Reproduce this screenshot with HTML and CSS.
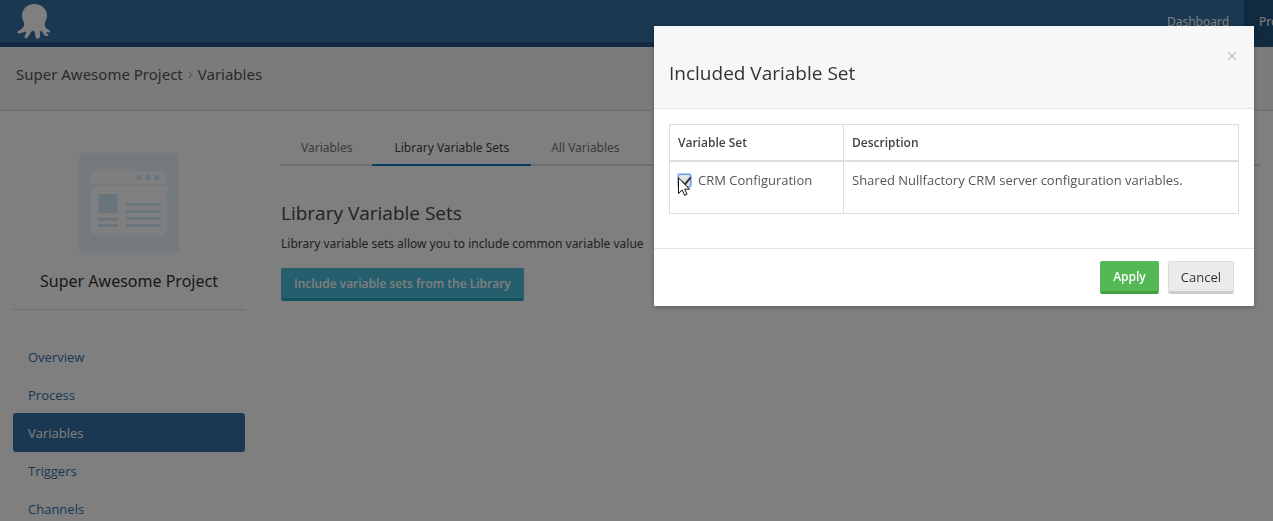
FILE: index.html
```html
<!DOCTYPE html>
<html lang="en">
<head>
<meta charset="utf-8">
<meta name="viewport" content="width=device-width, initial-scale=1">
<title>Library Variable Sets</title>
<link rel="stylesheet" href="styles.css">
</head>
<body>
<header class="topbar">
  <a class="logo" href="#" aria-label="Home">
    <svg width="34" height="35" viewBox="0 0 34 35" fill="#fff" aria-hidden="true">
      <path d="M17.500 0C10 0 5 5.200 5 11.700C5 15 6.600 17.400 7.200 20C7.400 23 4.500 25.500 1 27.300C-0.400 28.300 0.600 29.800 2.500 29.400C4.500 29.100 6 28.500 7.800 27.800C9.800 27.300 9.300 29 8.400 30.600C7.300 32.500 7 34 8.400 34.200C10.400 34.400 11.500 32.500 12.600 30.500C13.700 28.500 14.500 26.800 16 26.700C17.700 26.600 18 29 18.200 31.500C18.300 33.500 19 34.700 20.700 34.700C22.500 34.600 23.100 33 23.100 31.200C23.100 29.200 22.600 27.500 23.700 27.100C25 26.900 26 29 27.300 31C28.300 32.300 30.500 32.400 31.500 31.600C31.500 30.300 29.400 29.200 29.200 28.200C29.800 27.700 31.200 28.600 32.600 28.500C33.800 28.300 33.600 27.300 32.400 26.500C30 25 27.500 23.200 27.600 20.400C28 17.400 30 15.400 30 11.700C30 5.200 25 0 17.500 0Z"/>
    </svg>
  </a>
  <nav class="topnav">
    <a class="topnav-link" href="#">Dashboard</a>
    <a class="topnav-link selected" href="#">Projects</a>
  </nav>
</header>

<nav class="breadcrumb" aria-label="Breadcrumb">
  <a href="#">Super Awesome Project</a>
  <svg class="chevron" width="5" height="8" viewBox="0 0 5 8" aria-hidden="true"><path d="M1 1l3 3-3 3" fill="none" stroke="#bbb" stroke-width="1.500"/></svg>
  <span>Variables</span>
</nav>

<div class="page">
  <aside class="sidebar">
    <svg class="project-logo" width="100" height="100" viewBox="0 0 100 100" aria-hidden="true">
      <rect width="100" height="100" rx="2" fill="#ebf5fc"/>
      <rect x="12" y="18" width="76" height="64" rx="6" fill="#fff"/>
      <rect x="12" y="30.500" width="76" height="3" fill="#ebf5fc"/>
      <g fill="#d3e6f5">
        <circle cx="60" cy="24.500" r="2.800"/><circle cx="69" cy="24.500" r="2.800"/><circle cx="77.700" cy="24.500" r="2.800"/>
        <rect x="19.500" y="41" width="19" height="19"/>
        <rect x="19" y="65" width="20.500" height="2.500" rx="1"/>
        <rect x="19" y="71.300" width="20.500" height="2.500" rx="1"/>
        <rect x="47" y="50.300" width="35" height="2.500" rx="1"/>
        <rect x="47" y="57.300" width="35" height="2.500" rx="1"/>
        <rect x="47" y="64.300" width="35" height="2.500" rx="1"/>
        <rect x="47" y="71.300" width="35" height="2.500" rx="1"/>
      </g>
    </svg>
    <h2 class="project-name">Super Awesome Project</h2>
    <nav class="side-nav">
      <a href="#">Overview</a>
      <a href="#">Process</a>
      <a class="active" href="#" aria-current="page">Variables</a>
      <a href="#">Triggers</a>
      <a href="#">Channels</a>
    </nav>
  </aside>
  <main class="content">
    <nav class="tabs">
      <a href="#">Variables</a>
      <a class="active" href="#">Library Variable Sets</a>
      <a href="#">All Variables</a>
    </nav>
    <h1 class="content-title">Library Variable Sets</h1>
    <p class="content-text">Library variable sets allow you to include common variable value</p>
    <button class="btn btn-info" type="button">Include variable sets from the Library</button>
  </main>
</div>

<div class="backdrop">
  <section class="modal" role="dialog" aria-modal="true" aria-labelledby="modal-title">
    <header class="modal-header">
      <button class="close" type="button" aria-label="Close">
        <svg width="10" height="10" viewBox="0 0 10 10" aria-hidden="true"><path d="M1 1l8 8M9 1l-8 8" stroke="#ccc" stroke-width="1.600"/></svg>
      </button>
      <h2 class="modal-title" id="modal-title">Included Variable Set</h2>
    </header>
    <div class="modal-body">
      <table class="set-table">
        <thead>
          <tr><th class="set-column" scope="col">Variable Set</th><th scope="col">Description</th></tr>
        </thead>
        <tbody>
          <tr>
            <td><label class="check"><input type="checkbox" checked><span>CRM Configuration</span></label></td>
            <td>Shared Nullfactory CRM server configuration variables.</td>
          </tr>
        </tbody>
      </table>
    </div>
    <footer class="modal-footer">
      <button class="btn btn-success" type="button">Apply</button>
      <button class="btn btn-default" type="button">Cancel</button>
    </footer>
  </section>
</div>

<svg class="cursor" width="12" height="19" viewBox="0 0 12 19" aria-hidden="true">
  <path d="M0.500 0.800V16.500L4.200 13L6.600 18.300L9 17.200L6.700 12.200H11.500Z" fill="#fff" stroke="#111" stroke-width="1"/>
</svg>
</body>
</html>
```
FILE: styles.css
```css
* {
  box-sizing: border-box;
}

body {
  margin: 0;
  height: 100vh;
  overflow: hidden;
  background: #fff;
  color: #444;
  font-family: "Open Sans", "Noto Sans", sans-serif;
  font-size: 13px;
  line-height: 18px;
}

h1, h2, p {
  margin: 0;
  font-weight: 400;
}

a {
  color: inherit;
  text-decoration: none;
}

button {
  font-family: inherit;
  font-size: inherit;
  line-height: inherit;
}

.topbar {
  display: flex;
  justify-content: space-between;
  height: 47px;
  overflow: hidden;
  background: #3670a4;
  border-bottom: 5px solid #235480;
}

.logo {
  padding: 4px 0 0 17px;
}

.topnav {
  display: flex;
  height: 47px;
  margin-right: -50px;
  color: #fff;
  font-family: "Noto Sans", "Open Sans", sans-serif;
  font-size: 12px;
}

.topnav-link {
  padding: 13px 15px;
}

.topnav-link.selected {
  padding-right: 19px;
  background: #235480;
}

.breadcrumb {
  display: flex;
  align-items: center;
  gap: 5px;
  height: 64px;
  padding: 0 16px 9px;
  background: #f7f7f7;
  border-bottom: 1px solid #ddd;
  color: #555;
  font-family: "Noto Sans", "Open Sans", sans-serif;
  font-size: 15px;
  line-height: 24px;
}

.chevron {
  margin-top: 2px;
}

.page {
  display: flex;
  gap: 36px;
  padding: 18px 13px;
}

.sidebar {
  flex: none;
  width: 232px;
  padding-top: 24px;
}

.project-logo {
  display: block;
  margin: 0 auto;
}

.project-name {
  padding: 16px 0;
  border-bottom: 1px solid #ddd;
  color: #333;
  font-family: "Noto Sans", "Open Sans", sans-serif;
  font-size: 16px;
  line-height: 24px;
  text-align: center;
}

.side-nav {
  display: flex;
  flex-direction: column;
  margin-top: 27px;
}

.side-nav a {
  height: 38px;
  padding: 11px 15px;
  border-radius: 3px;
  color: #3670a4;
}

.side-nav .active {
  height: 39px;
  margin-bottom: -1px;
  background: #3670a4;
  color: #fff;
}

.content {
  flex: 1;
  min-width: 0;
}

.tabs {
  display: flex;
  border-bottom: 2px solid #ddd;
  color: #777;
  font-family: "Noto Sans", "Open Sans", sans-serif;
  font-size: 12px;
}

.tabs a {
  margin-bottom: -2px;
  padding: 10px 20px 7px;
  border-bottom: 2px solid transparent;
}

.tabs .active {
  padding-right: 22px;
  padding-left: 22px;
  border-color: #0b7cc4;
  color: #444;
}

.content-title {
  margin-top: 33px;
  font-size: 19px;
  line-height: 28px;
}

.content-text {
  margin: 8px 0 15px;
  font-family: "Noto Sans", "Open Sans", sans-serif;
  font-size: 12px;
}

.btn {
  padding: 6px 12px 5px;
  border: 1px solid;
  border-bottom-width: 3px;
  border-radius: 2px;
}

.btn-info {
  background: #4bbdd9;
  border-color: #4bbdd9;
  border-bottom-color: #2ba5c3;
  color: #fff;
  font-size: 12px;
  font-weight: 600;
}

.btn-success {
  background: #54b954;
  border-color: #54b954;
  border-bottom-color: #429f42;
  color: #fff;
  font-size: 12px;
  font-weight: 600;
}

.btn-default {
  background: #ebebeb;
  border-color: #ddd;
  border-bottom-color: #ccc;
  color: #333;
}

.backdrop {
  position: fixed;
  inset: 0;
  display: flex;
  justify-content: flex-end;
  align-items: flex-start;
  padding: 26px 19px;
  background: rgba(0, 0, 0, 0.5);
}

.modal {
  width: 600px;
  background: #fff;
  border-radius: 1px;
  box-shadow: 0 1px 4px rgba(0, 0, 0, 0.3);
}

.modal-header {
  display: flex;
  flex-direction: column;
  padding: 25px 15px 23px;
  background: #f7f7f7;
  border-bottom: 1px solid #e5e5e5;
}

.close {
  display: flex;
  align-self: flex-end;
  margin-right: 2px;
  padding: 0;
  border: 0;
  background: none;
}

.modal-title {
  color: #333;
  font-size: 19px;
  line-height: 24px;
}

.modal-body {
  padding: 15px 15px 34px;
}

.set-table {
  width: 100%;
  border-collapse: collapse;
}

.set-table th,
.set-table td {
  padding: 9px 8px 8px;
  border: 1px solid #ddd;
  text-align: left;
  vertical-align: top;
}

.set-table th {
  border-bottom-width: 2px;
  font-size: 12px;
  font-weight: 600;
}

.set-table td {
  height: 52px;
  color: #555;
}

.set-column {
  width: 174px;
}

.check {
  display: flex;
  align-items: center;
  gap: 7px;
}

.check input {
  width: 13px;
  height: 13px;
  margin: 0;
  appearance: none;
  border: 1px solid #6f9be8;
  border-radius: 2px;
  background: #e4e4e4;
  box-shadow: 0 0 0 1px #a9c7f7;
}

.check input::before {
  content: "";
  display: block;
  width: 4px;
  height: 8px;
  margin: 0 0 0 4px;
  border: solid #333;
  border-width: 0 2px 2px 0;
  transform: rotate(40deg);
}

.modal-footer {
  display: flex;
  justify-content: flex-end;
  gap: 9px;
  padding: 12px 20px;
  border-top: 1px solid #e5e5e5;
}

.cursor {
  position: fixed;
  top: 177px;
  right: 583px;
}
```
